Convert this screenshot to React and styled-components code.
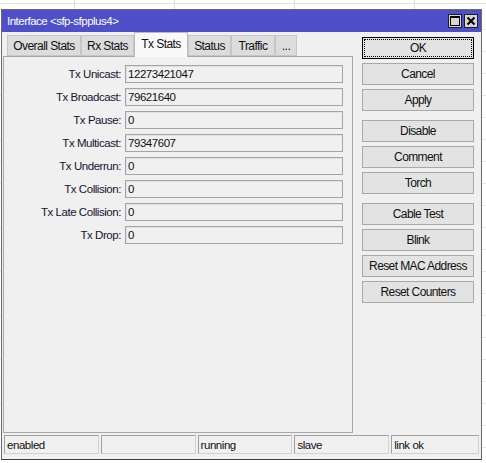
import React from "react";
import styled, { createGlobalStyle } from "styled-components";

const GlobalStyle = createGlobalStyle`
  html, body { margin: 0; padding: 0; background: #ffffff; }
  body {
    font-family: "Liberation Sans", Arial, sans-serif;
    font-size: 11.5px;
    letter-spacing: -0.45px;
    color: #111;
  }
`;

const Page = styled.div`
  width: 486px;
  height: 463px;
  box-sizing: border-box;
  padding: 9px 0 0 1px;
  background-color: #fff;
  background-image:
    linear-gradient(#e4e4e4, #e4e4e4),
    repeating-linear-gradient(to bottom, transparent 0 21px, #e6e6e6 21px 22px),
    linear-gradient(to right, transparent 74px, #dcdcdc 74px 75px, transparent 75px 174px, #dcdcdc 174px 175px, transparent 175px 294px, #dcdcdc 294px 295px, transparent 295px 414px, #dcdcdc 414px 415px, transparent 415px);
  background-size: 100% 1px, 100% 100%, 100% 9px;
  background-position: 0 3px, 0 8px, 0 0;
  background-repeat: no-repeat;
  overflow: hidden;
`;

const Window = styled.div`
  width: 481px;
  height: 451px;
  box-sizing: border-box;
  border: 1px solid #6a6a6a;
  border-bottom-color: #404040;
  background: #f0f0f0;
  display: flex;
  flex-direction: column;
`;

const TitleBar = styled.div`
  height: 22px;
  flex: none;
  background: #4f50c9;
  color: #fff;
  display: flex;
  align-items: center;
  justify-content: space-between;
  padding: 0 3px 0 5px;
  font-size: 11.5px;
  letter-spacing: -0.5px;
`;

const TitleButtons = styled.div`
  display: flex;
  gap: 2px;
`;

const TitleBtn = styled.div`
  width: 14px;
  height: 14px;
  box-sizing: border-box;
  border: 1px solid #1e1e1e;
  background: #d6d6d6;
  display: flex;
  align-items: center;
  justify-content: center;
`;

const Main = styled.div`
  flex: 1;
  display: flex;
  padding-left: 1px;
  min-height: 0;
`;

const LeftCol = styled.div`
  width: 350px;
  display: flex;
  flex-direction: column;
`;

const TabRow = styled.div`
  height: 24px;
  display: flex;
  align-items: flex-end;
  padding-left: 4px;
  flex: none;
`;

const Tab = styled.div`
  box-sizing: border-box;
  width: ${(p) => p.$w}px;
  height: ${(p) => (p.$active ? 25 : 21)}px;
  margin-bottom: ${(p) => (p.$active ? -1 : 0)}px;
  position: relative;
  z-index: ${(p) => (p.$active ? 1 : 0)};
  background: ${(p) => (p.$active ? "#f9f9f9" : "#dcdcdc")};
  border: 1px solid ${(p) => (p.$active ? "#bcbcbc" : "#c6c6c6")};
  border-bottom: ${(p) => (p.$active ? "none" : "1px solid #c6c6c6")};
  display: flex;
  align-items: center;
  justify-content: center;
  padding-bottom: ${(p) => (p.$active ? 3 : 0)}px;
  color: #111;
  font-size: 12px;
  letter-spacing: -0.55px;
`;

const Panel = styled.div`
  flex: 1;
  box-sizing: border-box;
  border: 1px solid #a8a8a8;
  display: flex;
  flex-direction: column;
  gap: 5px;
  padding: 8px 0 0 0;
`;

const Row = styled.div`
  display: flex;
  align-items: center;
  height: 18px;
`;

const Label = styled.div`
  width: 117px;
  text-align: right;
  padding-right: 4px;
  white-space: nowrap;
  color: #1a1030;
`;

const Field = styled.div`
  width: 218px;
  height: 18px;
  box-sizing: border-box;
  border: 1px solid #a4a4a4;
  background: #f0f0f0;
  display: flex;
  align-items: center;
  padding-left: 2px;
  box-shadow: inset 1px 1px 0 #e2e2e2;
  color: #111;
`;

const RightCol = styled.div`
  margin-left: 9px;
  padding-top: 5px;
  width: 112px;
  display: flex;
  flex-direction: column;
  gap: 4px;
`;

const Group = styled.div`
  display: flex;
  flex-direction: column;
  gap: 4px;
  margin-top: ${(p) => (p.$first ? 0 : 5)}px;
`;

const Button = styled.div`
  height: 22px;
  box-sizing: border-box;
  border: 1px solid ${(p) => (p.$default ? "#000" : "#a8a8a8")};
  background: #e3e3e3;
  display: flex;
  align-items: center;
  justify-content: center;
  position: relative;
  color: #111;
  font-size: 12px;
  letter-spacing: -0.6px;
  &::after {
    content: "";
    display: ${(p) => (p.$default ? "block" : "none")};
    position: absolute;
    inset: 1px;
    border: 1px dotted #000;
  }
`;

const StatusBar = styled.div`
  height: 26px;
  flex: none;
  display: flex;
  gap: 2px;
  padding: 2px 2px 5px 2px;
  box-sizing: border-box;
`;

const Cell = styled.div`
  width: ${(p) => p.$w}px;
  box-sizing: border-box;
  border: 1px solid;
  border-color: #a0a0a0 #d2d2d2 #d2d2d2 #a0a0a0;
  display: flex;
  align-items: center;
  padding-left: 2px;
  color: #111;
`;

const tabs = [
  ["Overall Stats", 74],
  ["Rx Stats", 53],
  ["Tx Stats", 54, true],
  ["Status", 43],
  ["Traffic", 44],
  ["...", 22],
];

const rows = [
  ["Tx Unicast:", "12273421047"],
  ["Tx Broadcast:", "79621640"],
  ["Tx Pause:", "0"],
  ["Tx Multicast:", "79347607"],
  ["Tx Underrun:", "0"],
  ["Tx Collision:", "0"],
  ["Tx Late Collision:", "0"],
  ["Tx Drop:", "0"],
];

const groups = [
  ["OK", "Cancel", "Apply"],
  ["Disable", "Comment", "Torch"],
  ["Cable Test", "Blink", "Reset MAC Address", "Reset Counters"],
];

const cells = [
  ["enabled", 95],
  ["", 95],
  ["running", 95],
  ["slave", 95],
  ["link ok", 88],
];

export default function App() {
  return (
    <>
      <GlobalStyle />
      <Page>
        <Window>
          <TitleBar>
            <span>Interface &lt;sfp-sfpplus4&gt;</span>
            <TitleButtons>
              <TitleBtn>
                <svg width="10" height="10" viewBox="0 0 10 10">
                  <rect x="0.5" y="0.5" width="9" height="9" fill="none" stroke="#000" />
                  <rect x="0" y="0" width="10" height="2" fill="#000" />
                </svg>
              </TitleBtn>
              <TitleBtn>
                <svg width="10" height="10" viewBox="0 0 10 10">
                  <path d="M1.5 1.5 L8.5 8.5 M8.5 1.5 L1.5 8.5" stroke="#000" strokeWidth="2" />
                </svg>
              </TitleBtn>
            </TitleButtons>
          </TitleBar>
          <Main>
            <LeftCol>
              <TabRow>
                {tabs.map(([t, w, a]) => (
                  <Tab key={t} $w={w} $active={a}>
                    {t}
                  </Tab>
                ))}
              </TabRow>
              <Panel>
                {rows.map(([l, v]) => (
                  <Row key={l}>
                    <Label>{l}</Label>
                    <Field>{v}</Field>
                  </Row>
                ))}
              </Panel>
            </LeftCol>
            <RightCol>
              {groups.map((g, i) => (
                <Group key={i} $first={i === 0}>
                  {g.map((b) => (
                    <Button key={b} $default={b === "OK"}>
                      {b}
                    </Button>
                  ))}
                </Group>
              ))}
            </RightCol>
          </Main>
          <StatusBar>
            {cells.map(([t, w], i) => (
              <Cell key={i} $w={w}>
                {t}
              </Cell>
            ))}
          </StatusBar>
        </Window>
      </Page>
    </>
  );
}
